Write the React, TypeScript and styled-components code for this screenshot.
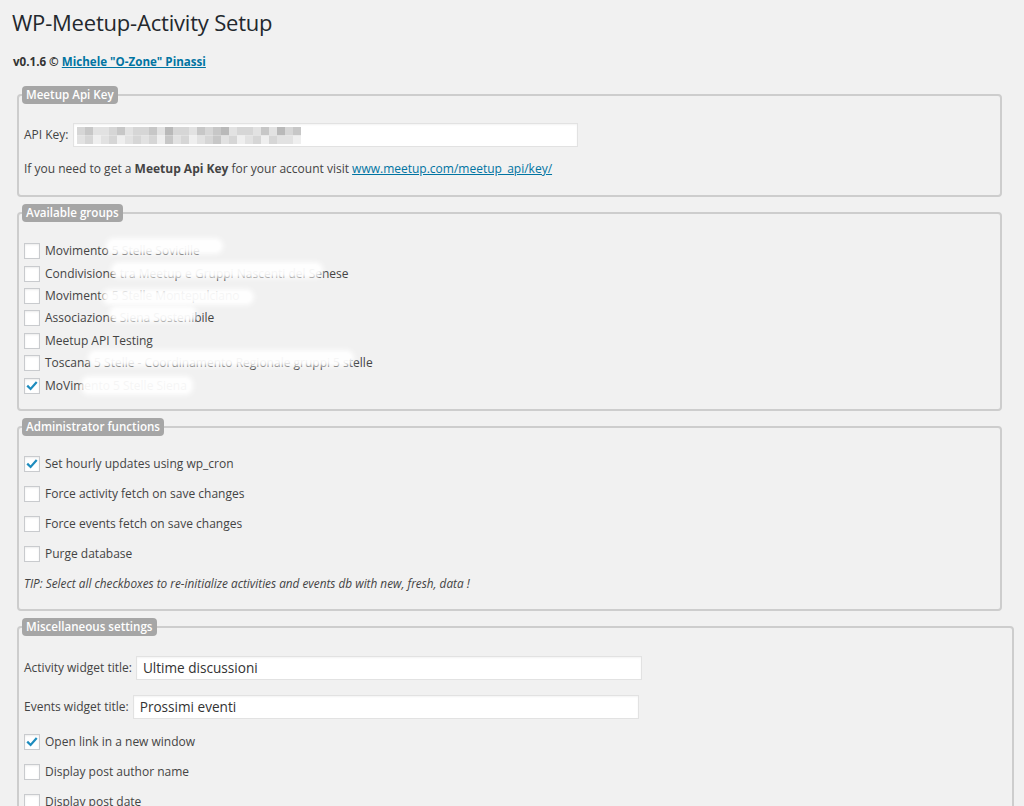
import styled, { createGlobalStyle } from "styled-components";

const GlobalStyle = createGlobalStyle`
  html, body {
    margin: 0;
    background: #f1f1f1;
  }
  body {
    font-family: "Open Sans", "Liberation Sans", sans-serif;
    font-size: 12px;
    color: #444;
  }
`;

const Wrap = styled.div`
  padding: 8px 0 0 12px;
  height: 806px;
  overflow: hidden;
  box-sizing: border-box;
`;

const Title = styled.h2`
  margin: 0;
  font-size: 22px;
  font-weight: 400;
  line-height: 29px;
  letter-spacing: -0.2px;
  color: #23282d;
`;

const Version = styled.p`
  margin: 17px 0 16px 1px;
  font-size: 11.6px;
  font-weight: 700;
  line-height: 16px;
  color: #333;
`;

const Link = styled.a<{ $bold?: boolean }>`
  color: #0074a2;
  text-decoration: underline;
  font-weight: ${({ $bold }) => ($bold ? 700 : 400)};
`;

const Box = styled.fieldset<{ $wide?: boolean }>`
  margin: 0 0 7px 5px;
  width: ${({ $wide }) => ($wide ? 997 : 985)}px;
  box-sizing: border-box;
  border: 2px solid #cdcdcd;
  border-radius: 4px;
  padding: 0 10px 0 5px;
`;

const Legend = styled.legend`
  margin-left: -2px;
  padding: 0 4px;
  background: #a6a6a6;
  color: #fff;
  font-size: 11.6px;
  font-weight: 600;
  line-height: 18px;
  border-radius: 4px;
`;

const Body = styled.div<{ $top: number; $bottom: number }>`
  padding: ${({ $top, $bottom }) => `${$top}px 0 ${$bottom}px`};
`;

const Row = styled.div<{ $h: number; $gap?: number }>`
  display: flex;
  align-items: center;
  height: ${({ $h }) => $h}px;
  margin-top: ${({ $gap }) => $gap ?? 0}px;
  line-height: 16px;
  white-space: nowrap;
`;

const Note = styled.p<{ $gap: number }>`
  margin: ${({ $gap }) => $gap}px 0 0;
  line-height: 18px;
  white-space: nowrap;
`;

const Tip = styled.p`
  margin: 5px 0 0;
  font-size: 11.8px;
  font-style: italic;
  line-height: 18px;
  white-space: nowrap;
`;

const FieldLabel = styled.span`
  margin-right: 4px;
`;

const Field = styled.div`
  width: 505px;
  height: 24px;
  box-sizing: border-box;
  background: #fff;
  border: 1px solid #e2e2e2;
  box-shadow: inset 0 1px 2px rgba(0, 0, 0, 0.05);
  display: flex;
  align-items: center;
  padding-left: 3px;
`;

const TextInput = styled.input`
  width: 506px;
  height: 24px;
  box-sizing: border-box;
  margin: 0;
  background: #fff;
  border: 1px solid #e2e2e2;
  box-shadow: inset 0 1px 2px rgba(0, 0, 0, 0.05);
  padding: 0 6px;
  font-family: "Open Sans", "Liberation Sans", sans-serif;
  font-size: 13.6px;
  color: #333;
  outline: none;
`;

const CheckBox = styled.span`
  flex: none;
  width: 16px;
  height: 16px;
  box-sizing: border-box;
  margin-right: 5px;
  background: #fff;
  border: 1px solid #c9cbce;
  box-shadow: inset 0 1px 2px rgba(0, 0, 0, 0.08);
  display: inline-flex;
  align-items: center;
  justify-content: center;
`;

const GroupLabel = styled.span`
  position: relative;
`;

const Smudge = styled.span<{ $left: number; $width: number; $top: number; $height: number }>`
  position: absolute;
  left: ${({ $left }) => $left}px;
  width: ${({ $width }) => $width}px;
  top: ${({ $top }) => $top}px;
  height: ${({ $height }) => $height}px;
  background: #fff;
  opacity: 0.95;
  border-radius: 8px;
  filter: blur(2px);
`;

function Tick() {
  return (
    <svg width="12" height="12" viewBox="0 0 12 12">
      <path d="M2 6.4 L4.6 9 L10 2.8" fill="none" stroke="#1e8cbe" strokeWidth="2.2" strokeLinecap="square" />
    </svg>
  );
}

function Check({ checked, children }: { checked?: boolean; children: React.ReactNode }) {
  return (
    <>
      <CheckBox>{checked && <Tick />}</CheckBox>
      {children}
    </>
  );
}

// pixelated, blurred API key
const keyCells = [
  "cbddcbdccbdaccdbcbadccdbdacb",
  "dcedcedcdcebdcedcbdcedcecdde",
];
const shade: Record<string, string> = { a: "#b9b9b9", b: "#c7c7c7", c: "#d6d6d6", d: "#e2e2e2", e: "#efefef" };

function HiddenKey() {
  return (
    <svg width="226" height="17" viewBox="0 0 226 17">
      {keyCells.map((line, r) =>
        line.split("").map((ch, i) => (
          <rect key={`${r}-${i}`} x={i * 8} y={r * 8.5} width="8" height="8.5" fill={shade[ch]} />
        ))
      )}
    </svg>
  );
}

const groups = [
  { name: "Movimento 5 Stelle Sovicille", s: [61, 117, -5, 16] },
  { name: "Condivisione tra Meetup e Gruppi Nascenti del Senese", s: [66, 212, -4, 16] },
  { name: "Movimento 5 Stelle Montepulciano", s: [57, 152, 1, 16] },
  { name: "Associazione Siena Sostenibile", s: [64, 88, -4, 16] },
  { name: "Meetup API Testing" },
  { name: "Toscana 5 Stelle - Coordinamento Regionale gruppi 5 stelle", s: [43, 266, -5, 16] },
  { name: "MoVimento 5 Stelle Siena", s: [36, 112, -2, 19], checked: true },
];

const admin = [
  { label: "Set hourly updates using wp_cron", checked: true },
  { label: "Force activity fetch on save changes" },
  { label: "Force events fetch on save changes" },
  { label: "Purge database" },
];

const misc = [
  { label: "Open link in a new window", checked: true },
  { label: "Display post author name" },
  { label: "Display post date" },
];

export default function App() {
  return (
    <Wrap>
      <GlobalStyle />
      <Title>WP-Meetup-Activity Setup</Title>
      <Version>
        v0.1.6 © <Link $bold href="#">Michele "O-Zone" Pinassi</Link>
      </Version>

      <Box>
        <Legend>Meetup Api Key</Legend>
        <Body $top={19} $bottom={17}>
          <Row $h={24}>
            <FieldLabel>API Key:</FieldLabel>
            <Field>
              <HiddenKey />
            </Field>
          </Row>
          <Note $gap={13}>
            If you need to get a <b>Meetup Api Key</b> for your account visit{" "}
            <Link href="#">www.meetup.com/meetup_api/key/</Link>
          </Note>
        </Body>
      </Box>

      <Box>
        <Legend>Available groups</Legend>
        <Body $top={18} $bottom={12}>
          {groups.map((g) => (
            <Row key={g.name} $h={22.4}>
              <Check checked={g.checked}>
                <GroupLabel>
                  {g.name}
                  {g.s && <Smudge $left={g.s[0]} $width={g.s[1]} $top={g.s[2]} $height={g.s[3]} />}
                </GroupLabel>
              </Check>
            </Row>
          ))}
        </Body>
      </Box>

      <Box>
        <Legend>Administrator functions</Legend>
        <Body $top={13} $bottom={17}>
          {admin.map((a) => (
            <Row key={a.label} $h={30}>
              <Check checked={a.checked}>{a.label}</Check>
            </Row>
          ))}
          <Tip>TIP: Select all checkboxes to re-initialize activities and events db with new, fresh, data !</Tip>
        </Body>
      </Box>

      <Box $wide>
        <Legend>Miscellaneous settings</Legend>
        <Body $top={20} $bottom={20}>
          <Row $h={24}>
            <FieldLabel>Activity widget title:</FieldLabel>
            <TextInput readOnly value="Ultime discussioni" />
          </Row>
          <Row $h={24} $gap={15}>
            <FieldLabel>Events widget title:</FieldLabel>
            <TextInput readOnly value="Prossimi eventi" />
          </Row>
          <Row $h={8} />
          {misc.map((m) => (
            <Row key={m.label} $h={30}>
              <Check checked={m.checked}>{m.label}</Check>
            </Row>
          ))}
        </Body>
      </Box>
    </Wrap>
  );
}
